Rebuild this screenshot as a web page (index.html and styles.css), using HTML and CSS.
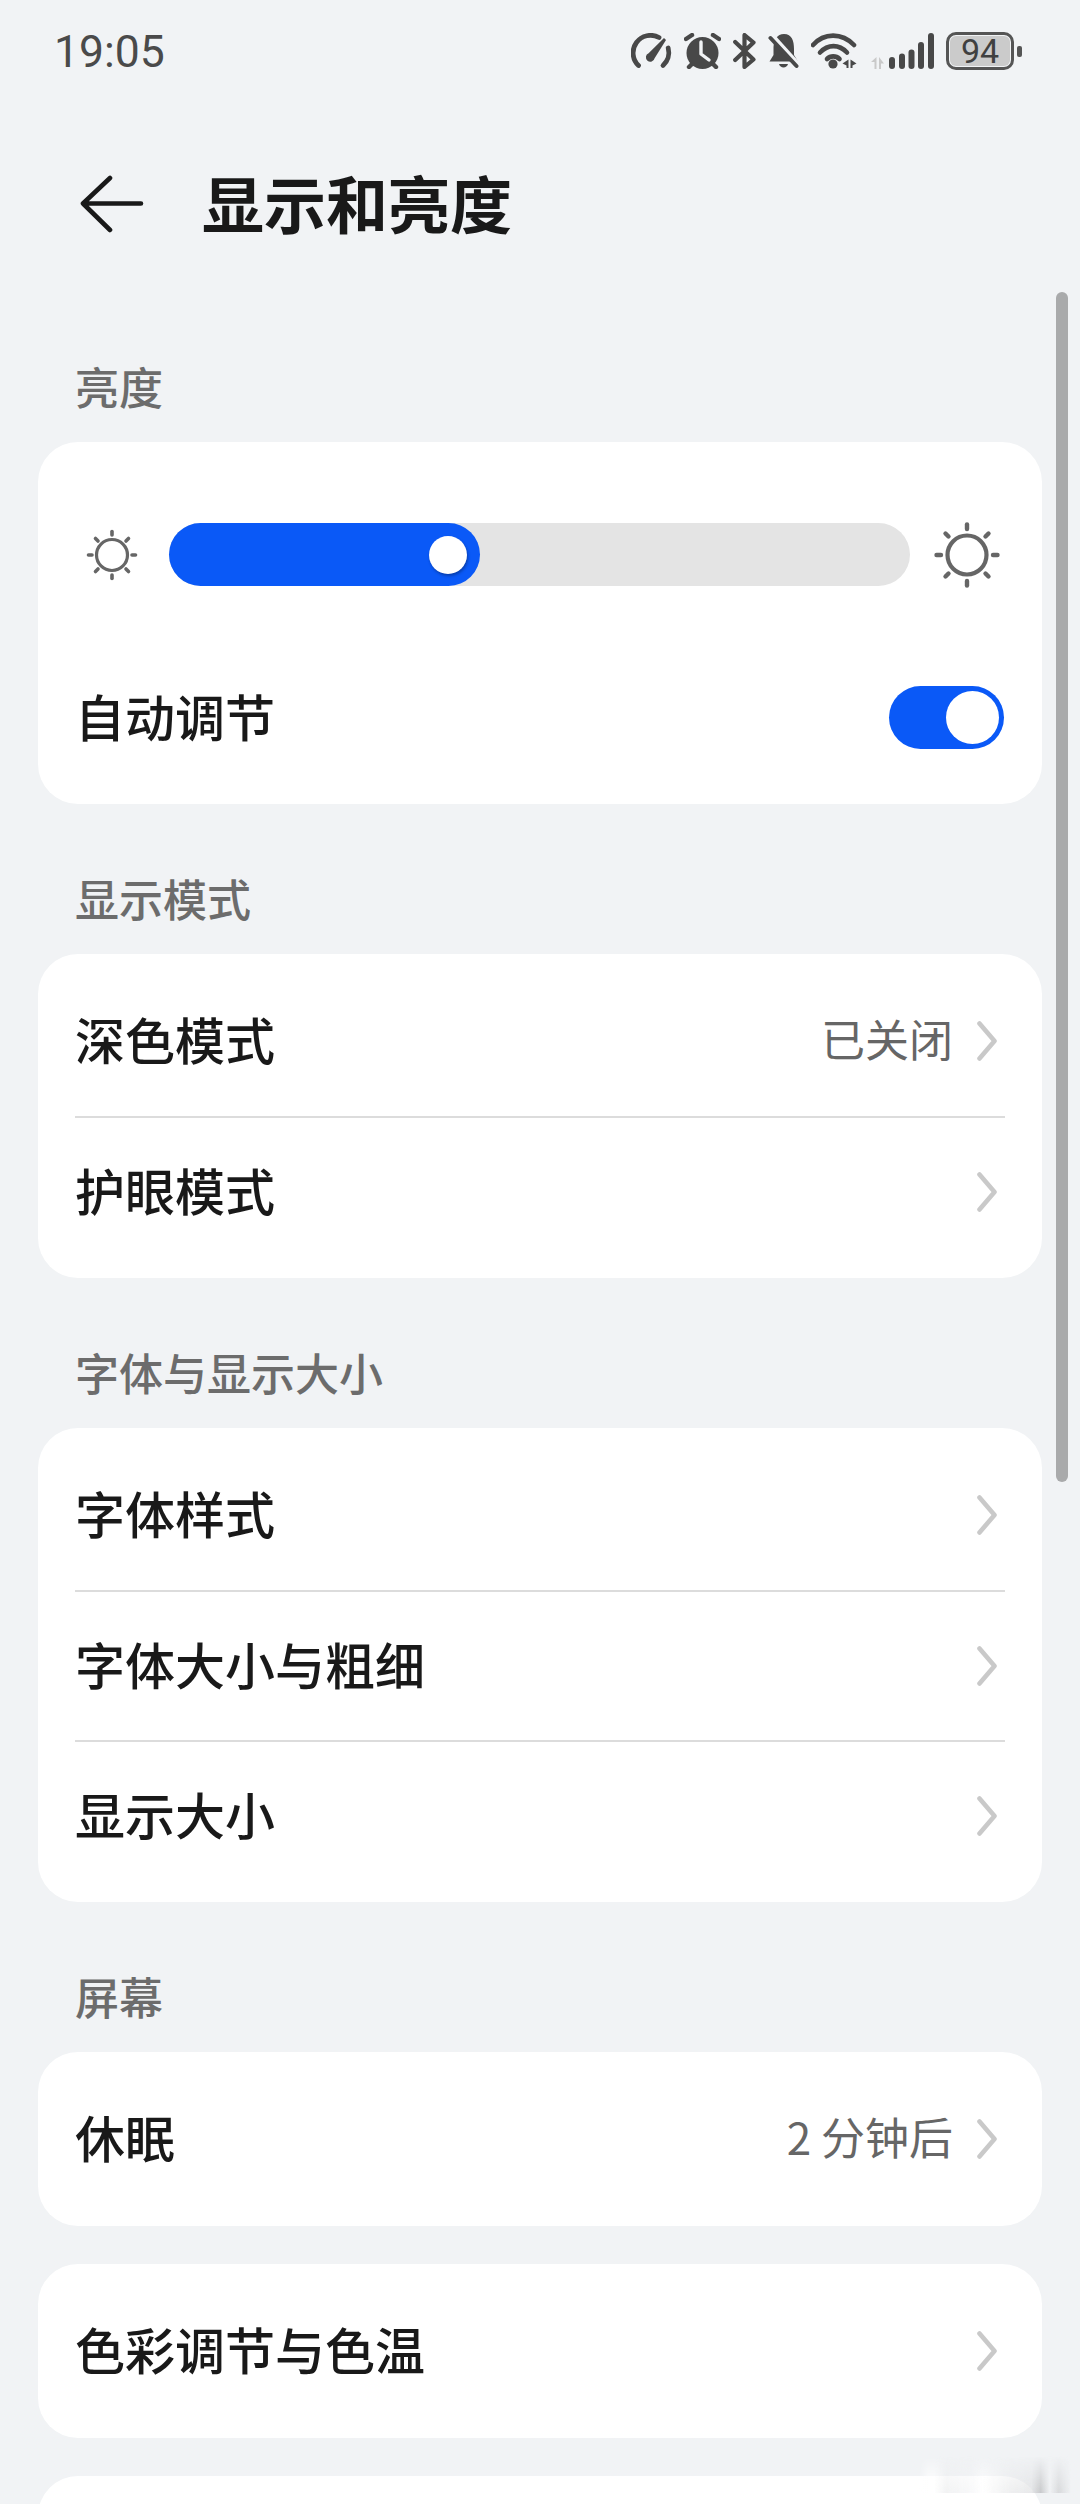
FILE: index.html
```html
<!DOCTYPE html>
<html lang="zh-CN">
<head>
  <meta charset="UTF-8">
  <meta name="viewport" content="width=device-width, initial-scale=1.0">
  <title>显示和亮度</title>
  <link rel="stylesheet" href="styles.css">
</head>
<body>
  <svg class="defs" width="0" height="0">
    <symbol id="chevron" viewBox="0 0 20 40">
      <path d="M2.5 2.5 L17.5 20 L2.5 37.5" fill="none" stroke="#c9c9c9" stroke-width="4.6" stroke-linecap="round" stroke-linejoin="round"/>
    </symbol>
  </svg>

  <div class="page">
    <div class="status-bar">
      <span class="time">19:05</span>
      <div class="status-icons">
        <!-- speed -->
        <svg width="41" height="36" viewBox="0 0 41 36">
          <g fill="none" stroke="#484848" stroke-width="4.8" stroke-linecap="round">
            <path d="M7.5 32.5 A17.5 17.5 0 0 1 28 4.5"/>
            <path d="M37.2 15 A17.5 17.5 0 0 1 32 32.5"/>
          </g>
          <path d="M17.6 20.2 L33 5 L35 7 L23.6 25.2 A4.4 4.4 0 1 1 17.6 20.2Z" fill="#484848"/>
        </svg>
        <!-- alarm -->
        <svg width="37" height="36" viewBox="0 0 37 36">
          <circle cx="18.5" cy="20" r="16" fill="#484848"/>
          <g fill="none" stroke="#484848" stroke-width="4.4" stroke-linecap="round">
            <path d="M2 6 L8 2"/>
            <path d="M35 6 L29 2"/>
            <path d="M5 34 L8 31"/>
            <path d="M32 34 L29 31"/>
          </g>
          <path d="M17 9 V21 L25 27" fill="none" stroke="#f1f3f5" stroke-width="3.4" stroke-linecap="round" stroke-linejoin="round"/>
        </svg>
        <!-- bluetooth -->
        <svg width="23" height="36" viewBox="0 0 23 36">
          <path d="M2.2 27 L20.5 9.5 L11.5 2 V34 L20.5 26.5 L2.2 9" fill="none" stroke="#484848" stroke-width="4.2" stroke-linecap="round" stroke-linejoin="round"/>
        </svg>
        <!-- muted bell -->
        <svg width="31" height="36" viewBox="0 0 31 36">
          <path d="M16 1 C24 1 26 8 26 16 V22 L30 28.5 H1.5 L5.5 22 V14 C6 7 9 1 16 1Z" fill="#484848"/>
          <path d="M11 31 H20 C19 35.5 12 35.5 11 31Z" fill="#484848"/>
          <path d="M2 0 L31 32" stroke="#f1f3f5" stroke-width="4.5"/>
          <path d="M2.5 5 L28.5 33" stroke="#484848" stroke-width="4" stroke-linecap="round"/>
        </svg>
        <!-- wifi -->
        <svg width="46" height="36" viewBox="0 0 46 36">
          <g fill="none" stroke="#484848" stroke-width="4.6" stroke-linecap="round">
            <path d="M2 12 C13 -0.5 31 -0.5 43 12"/>
            <path d="M9 19.5 C17 11 28 11 36 19.5"/>
            <path d="M16 26 C19.5 22.5 25 22.5 28.5 26"/>
          </g>
          <circle cx="22" cy="31" r="4.6" fill="#484848"/>
          <path d="M37.5 26.5 V35 H35.5 V32.5 L31.5 30.5Z M39.5 26.5 L45.5 30.5 L41.5 32.5 V35 H39.5Z" fill="#484848"/>
        </svg>
        <!-- signal -->
        <svg class="signal" width="64" height="36" viewBox="0 0 64 36">
          <path d="M6.5 24 V36 H4.5 V29 L1 29Z M9 24 L14 30.5 H11 V36 H9Z" fill="#c9c9c9"/>
          <g fill="#484848">
            <rect x="19" y="24" width="6" height="12" rx="3"/>
            <rect x="29" y="20.5" width="6" height="15.5" rx="3"/>
            <rect x="38.5" y="16.5" width="6" height="19.5" rx="3"/>
            <rect x="48" y="9" width="6" height="27" rx="3"/>
            <rect x="58" y="0" width="6" height="36" rx="3"/>
          </g>
        </svg>
        <div class="battery"><span class="battery-level">94</span></div>
        <span class="battery-tip"></span>
      </div>
    </div>

    <div class="header">
      <svg class="back" width="64" height="58" viewBox="0 0 64 58">
        <path d="M30 3 L3 28.5 L30 55 M3 28.5 H61" fill="none" stroke="#191919" stroke-width="4.6" stroke-linecap="round" stroke-linejoin="round"/>
      </svg>
      <h1>显示和亮度</h1>
    </div>

    <div class="section">
      <div class="section-title">亮度</div>
      <div class="card brightness">
        <div class="slider-row">
          <svg width="66" height="66" viewBox="0 0 66 66">
            <circle cx="33" cy="33" r="15.5" fill="none" stroke="#666" stroke-width="3.2"/>
            <g stroke="#666" stroke-width="3.6" stroke-linecap="round">
              <path d="M33 9.5 V13"/><path d="M33 53 V56.5"/>
              <path d="M9.5 33 H13"/><path d="M53 33 H56.5"/>
              <path d="M16.5 16.5 L19 19"/><path d="M47 47 L49.5 49.5"/>
              <path d="M16.5 49.5 L19 47"/><path d="M47 19 L49.5 16.5"/>
            </g>
          </svg>
          <div class="slider">
            <div class="slider-fill" style="width: 311px"><span class="slider-thumb"></span></div>
          </div>
          <svg width="66" height="66" viewBox="0 0 66 66">
            <circle cx="33" cy="33" r="19.5" fill="none" stroke="#666" stroke-width="4.2"/>
            <g stroke="#666" stroke-width="4.4" stroke-linecap="round">
              <path d="M33 2.5 V7"/><path d="M33 59 V63.5"/>
              <path d="M2.5 33 H7"/><path d="M59 33 H63.5"/>
              <path d="M11.5 11.5 L14.5 14.5"/><path d="M51.5 51.5 L54.5 54.5"/>
              <path d="M11.5 54.5 L14.5 51.5"/><path d="M51.5 14.5 L54.5 11.5"/>
            </g>
          </svg>
        </div>
        <div class="toggle-row">
          <span class="row-label">自动调节</span>
          <span class="toggle"><span class="toggle-knob"></span></span>
        </div>
      </div>
    </div>

    <div class="section">
      <div class="section-title">显示模式</div>
      <div class="card">
        <div class="row">
          <span class="row-label">深色模式</span>
          <span class="row-value">已关闭</span>
          <svg class="chevron"><use href="#chevron"/></svg>
        </div>
        <div class="row">
          <span class="row-label">护眼模式</span>
          <svg class="chevron"><use href="#chevron"/></svg>
        </div>
      </div>
    </div>

    <div class="section">
      <div class="section-title">字体与显示大小</div>
      <div class="card">
        <div class="row">
          <span class="row-label">字体样式</span>
          <svg class="chevron"><use href="#chevron"/></svg>
        </div>
        <div class="row">
          <span class="row-label">字体大小与粗细</span>
          <svg class="chevron"><use href="#chevron"/></svg>
        </div>
        <div class="row">
          <span class="row-label">显示大小</span>
          <svg class="chevron"><use href="#chevron"/></svg>
        </div>
      </div>
    </div>

    <div class="section">
      <div class="section-title">屏幕</div>
      <div class="card">
        <div class="row">
          <span class="row-label">休眠</span>
          <span class="row-value">2 分钟后</span>
          <svg class="chevron"><use href="#chevron"/></svg>
        </div>
      </div>
      <div class="card card-gap">
        <div class="row">
          <span class="row-label">色彩调节与色温</span>
          <svg class="chevron"><use href="#chevron"/></svg>
        </div>
      </div>
      <div class="card card-gap card-cut"></div>
    </div>

    <div class="scrollbar"></div>
    <div class="smudge"></div>
  </div>
</body>
</html>
```

FILE: styles.css
```css
body {
  margin: 0;
  background: #f1f3f5;
  font-family: "Noto Sans CJK SC", "Noto Sans", sans-serif;
  color: #191919;
}

.defs {
  position: absolute;
}

.page {
  position: relative;
  width: 1080px;
  height: 2504px;
  overflow: hidden;
}

.status-bar {
  display: flex;
  align-items: center;
  justify-content: space-between;
  height: 102px;
  padding: 0 58px 0 54px;
  box-sizing: border-box;
}

.time {
  margin-top: 2px;
  font-family: Roboto, sans-serif;
  font-size: 44.5px;
  color: #4a4a4a;
}

.status-icons {
  display: flex;
  align-items: center;
  gap: 12px;
}

.signal {
  margin-left: 1px;
}

.battery {
  display: flex;
  align-items: center;
  justify-content: center;
  width: 68px;
  height: 38px;
  box-sizing: border-box;
  border: 3px solid #555;
  border-radius: 10px;
  padding: 1px;
  background: #cbcbcb content-box;
}

.battery-level {
  font-family: Roboto, sans-serif;
  font-size: 34px;
  line-height: 32px;
  color: #404040;
}

.battery-tip {
  width: 5px;
  height: 11px;
  margin-left: -9px;
  border-radius: 2px;
  background: #555;
}

.header {
  display: flex;
  align-items: center;
  height: 174px;
  padding: 16px 0 0 80px;
}

.back {
  margin-top: -2px;
}

.header h1 {
  margin: 0 0 6px 58px;
  font-size: 62px;
  font-weight: 700;
  line-height: 80px;
}

.section {
  margin: 0 38px;
  padding-top: 64px;
}

.section-title {
  margin: 0 0 26px 37px;
  font-size: 44px;
  font-weight: 500;
  line-height: 60px;
  color: #6c6c6c;
}

.card {
  padding: 12px 37px;
  border-radius: 40px;
  background: #fff;
}

.card-gap {
  margin-top: 38px;
}

.card-cut {
  height: 200px;
}

.brightness {
  padding: 81px 38px 55px;
}

.slider-row {
  display: flex;
  align-items: center;
  gap: 24px;
  height: 63px;
  margin: 0 4px 0 3px;
}

.slider {
  flex: 1;
  height: 63px;
  border-radius: 32px;
  background: #e4e4e4;
}

.slider-fill {
  display: flex;
  align-items: center;
  justify-content: flex-end;
  height: 100%;
  padding-right: 13px;
  box-sizing: border-box;
  border-radius: 32px;
  background: #0a59f7;
}

.slider-thumb {
  width: 38px;
  height: 38px;
  border-radius: 50%;
  background: #fff;
  box-shadow: 1px 2px 3px rgba(0, 0, 0, 0.3);
}

.toggle-row {
  display: flex;
  align-items: center;
  justify-content: space-between;
  margin-top: 100px;
  height: 63px;
}

.toggle-row .row-label {
  margin-left: -1px;
}

.toggle {
  display: flex;
  align-items: center;
  justify-content: flex-end;
  width: 115px;
  height: 63px;
  padding-right: 5px;
  box-sizing: border-box;
  border-radius: 32px;
  background: #0a59f7;
}

.toggle-knob {
  width: 53px;
  height: 53px;
  border-radius: 50%;
  background: #fff;
}

.row {
  display: flex;
  align-items: center;
  height: 150px;
  box-sizing: border-box;
  padding-right: 8px;
}

.row + .row {
  border-top: 2px solid #dcdcdc;
}

.row-label {
  flex: 1;
  margin-bottom: 6px;
  font-size: 50px;
  font-weight: 500;
  line-height: 60px;
}

.row-value {
  margin: 0 24px 6px 0;
  font-size: 44px;
  line-height: 60px;
  color: #666;
}

.chevron {
  width: 20px;
  height: 40px;
}

.scrollbar {
  position: absolute;
  top: 292px;
  left: 1056px;
  width: 12px;
  height: 1190px;
  border-radius: 6px;
  background: #a9aaab;
}

.smudge {
  position: absolute;
  top: 2456px;
  left: 919px;
  width: 152px;
  height: 37px;
  background: linear-gradient(90deg, rgba(255, 255, 255, 0), #fff 6%, #fff 10%, rgba(236, 237, 238, 0.7) 18%, rgba(240, 241, 243, 0.5) 34%, rgba(255, 255, 255, 0.8) 42%, rgba(230, 231, 232, 0.6) 58%, rgba(222, 223, 225, 0.7) 74%, rgba(190, 191, 193, 0.8) 80%, rgba(240, 241, 243, 0.5) 86%, rgba(205, 206, 208, 0.7) 92%, rgba(255, 255, 255, 0));
  -webkit-mask-image: linear-gradient(rgba(0, 0, 0, 0), #000);
  mask-image: linear-gradient(rgba(0, 0, 0, 0), #000);
}
```
